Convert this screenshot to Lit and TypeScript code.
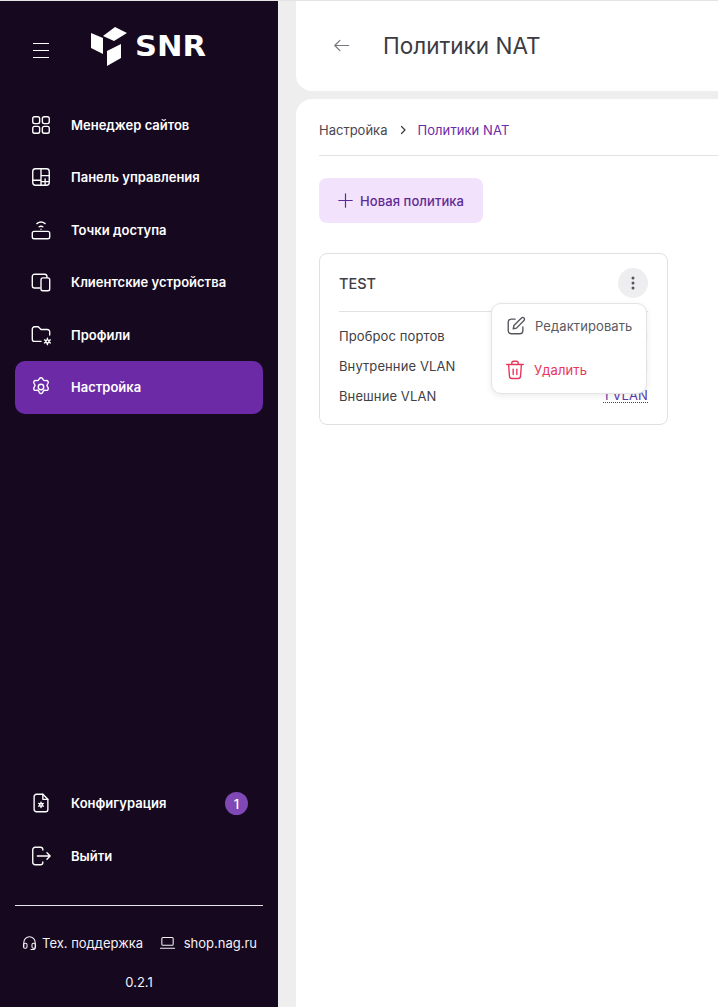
import { LitElement, html, css, svg } from "lit";
import { customElement } from "lit/decorators.js";

const I = (c: unknown, s = 22) => html`<svg class="ic" width=${s} height=${s} viewBox="0 0 24 24" fill="none" stroke="currentColor" stroke-width="1.5" stroke-linecap="round" stroke-linejoin="round">${c}</svg>`;

const nav = [
  ["Менеджер сайтов", svg`<rect x="3" y="3" width="7.5" height="7.5" rx="2"/><rect x="13.5" y="3" width="7.5" height="7.5" rx="2"/><rect x="3" y="13.5" width="7.5" height="7.5" rx="2"/><rect x="13.5" y="13.5" width="7.5" height="7.5" rx="2"/>`],
  ["Панель управления", svg`<rect x="3" y="3" width="18" height="18" rx="3"/><path d="M3 15.500h9M12 3v18M12 10.500h9M16.500 14v7M12 17h9"/>`],
  ["Точки доступа", svg`<rect x="2.500" y="13.500" width="19" height="8" rx="2"/><path d="M7.500 5c2.700-2 6.300-2 9 0M10 8.500c1.200-.8 2.800-.8 4 0M12 11.200v.1"/>`],
  ["Клиентские устройства", svg`<path d="M11 18.500H5a2.500 2.500 0 0 1-2.500-2.500V6A2.500 2.500 0 0 1 5 3.500h11A2.500 2.500 0 0 1 18.500 6v1"/><rect x="12" y="7.500" width="9.500" height="14" rx="2"/>`],
  ["Профили", svg`<path d="M12 19H5a2.500 2.500 0 0 1-2.500-2.500v-11A2.500 2.500 0 0 1 5 3h4l3 3h7a2.500 2.500 0 0 1 2.500 2.500V12"/><circle cx="19" cy="19" r="1.700"/><path d="M19 15.500v1.500M19 21v1.500M15.800 17.300l1.500.8M20.700 19.900l1.500.8M15.800 20.700l1.500-.8M20.700 18.100l1.500-.8"/>`],
  ["Настройка", svg`<circle cx="12" cy="12" r="3"/><path d="M10.300 2.800a2 2 0 0 1 3.400 0l.7 1.200a2 2 0 0 0 1.900 1l1.500-.1a2 2 0 0 1 1.900 3l-.8 1.300a2 2 0 0 0 0 2.200l.8 1.300a2 2 0 0 1-1.900 3l-1.500-.1a2 2 0 0 0-1.900 1l-.7 1.600a2 2 0 0 1-3.400 0l-.7-1.600a2 2 0 0 0-1.900-1l-1.500.1a2 2 0 0 1-1.900-3l.8-1.300a2 2 0 0 0 0-2.200l-.8-1.300a2 2 0 0 1 1.900-3l1.500.1a2 2 0 0 0 1.900-1z"/>`],
] as const;

@customElement("app-root")
export class AppRoot extends LitElement {
  static styles = css`
    :host { display: block; font-family: Inter, "Liberation Sans", sans-serif; }
    * { box-sizing: border-box; }
    .page { display: flex; width: 718px; height: 1007px; overflow: hidden; background: #eeeeee; border-top: 1px solid #e4e4e4; }
    .side { width: 278px; flex: none; background: #15081f; color: #fff; display: flex; flex-direction: column; padding: 0 15px 9px; }
    .top { height: 90px; flex: none; display: flex; align-items: center; padding-left: 17px; margin-bottom: 7.500px; }
    .burger { color: #fff; width: 18px; height: 18px; display: block; margin-top: 8px; flex: none; }
    .logo { display: flex; align-items: center; margin-left: 40px; gap: 7px; }
    .logo svg { display: block; flex: none; }
    .logo-text { font: 700 28px/28px "DejaVu Sans", sans-serif; transform: scaleX(1.090); transform-origin: left center; padding-top: 2px; }
    .nav { display: flex; flex-direction: column; flex: 1; }
    .item { height: 52.500px; flex: none; display: flex; align-items: center; padding-left: 15px; gap: 19px; border-radius: 10px; font-size: 13px; font-weight: 600; color: #fff; position: relative; }
    .item.active { background: #6c2aa6; }
    .ic { flex: none; display: block; }
    .item .badge { position: absolute; right: 15px; top: 15px; width: 23px; height: 23px; border-radius: 50%; background: #7f48b4; font-size: 13px; font-weight: 500; display: flex; align-items: center; justify-content: center; }
    .spacer { flex: 1; }
    .bottom { display: flex; flex-direction: column; }
    .hr { height: 1px; background: #e8e4ea; margin-top: 23px; }
    .links { display: flex; align-items: center; justify-content: space-between; padding: 27px 6px 0 6px; font-size: 13px; color: #f4f1f6; height: 46px; }
    .link { display: flex; align-items: center; gap: 4px; }
    .link.shop { gap: 8px; }
    .ver { text-align: center; font-size: 13px; color: #f4f1f6; margin-top: 22px; height: 24px; }

    .main { flex: 1; min-width: 0; padding-left: 18px; display: flex; flex-direction: column; gap: 8px; }
    .head { height: 90px; flex: none; background: #fff; border-bottom-left-radius: 16px; display: flex; align-items: center; padding: 0 0 2px 36px; gap: 32px; color: #3c3c44; }
    .head .ic { color: #77777d; }
    h1 { margin: 0; font-size: 22.500px; font-weight: 400; color: #3b3b42; }
    .content { flex: 1; background: #fff; border-top-left-radius: 16px; padding-left: 23px; }
    .crumbs { height: 57px; display: flex; align-items: center; font-size: 13px; border-bottom: 1px solid #e2e2e2; color: #4a4650; padding-top: 6px; }
    .crumbs .chev { margin: 0 8px 0 10px; color: #3a3640; }
    .crumbs .chev svg { stroke-width: 2.400; }
    .crumbs b { font-weight: 400; color: #6c2aa6; letter-spacing: .08px; }
    .btn { margin-top: 22px; width: 164px; height: 45px; border-radius: 8px; background: #f2e2fc; color: #5f2a96; display: flex; align-items: center; padding-left: 17px; gap: 5px; font-size: 13px; font-weight: 500; letter-spacing: .08px; }
    .card { position: relative; margin-top: 30px; width: 349px; height: 172px; border: 1px solid #e0e0e0; border-radius: 8px; padding: 0 19px; color: #3f3f46; }
    .card-head { height: 58px; padding-top: 1px; display: flex; align-items: center; justify-content: space-between; border-bottom: 1px solid #e2e2e2; font-size: 14.500px; font-weight: 500; }
    .more { width: 30px; height: 30px; border-radius: 50%; background: #eeeef0; display: flex; align-items: center; justify-content: center; color: #55555c; }
    .rows { padding-top: 9px; display: flex; flex-direction: column; font-size: 13px; letter-spacing: .1px; }
    .row { height: 30px; display: flex; align-items: center; justify-content: space-between; }
    .val { color: #5b3aa8; }
    .val.dotted { border-bottom: 1px dotted #6c2aa6; line-height: 13px; }
    .menu { position: absolute; left: 171px; top: 49px; width: 156px; height: 91px; background: #fff; border: 1px solid #e4e4e4; border-radius: 10px; box-shadow: 0 2px 6px rgba(0,0,0,.08); font-size: 13px; letter-spacing: .1px; color: #5a5a60; display: flex; flex-direction: column; }
    .mi { height: 44px; display: flex; align-items: center; padding-left: 13px; gap: 8px; }
    .mi .ic { color: #55555c; }
    .mi.del { color: #e8365d; gap: 8px; padding-left: 12px; }
    .mi.del .ic { color: #e8365d; }
  `;

  render() {
    return html`<div class="page">
      <aside class="side">
        <div class="top">
          <svg class="burger" viewBox="0 0 18 18" fill="none" stroke="currentColor" stroke-width="1"><path d="M1 2.500h16M1 9.500h16M1 16.500h16"/></svg>
          <div class="logo">
            <svg width="38" height="40" viewBox="0 0 38 40" fill="#fff">
              <path d="M13 10L25 1l12 6-13 8z"/>
              <path d="M1 7l12 5v16L1 22z"/>
              <path d="M17 25l14-7v14l-14 8z"/>
            </svg>
            <span class="logo-text">SNR</span>
          </div>
        </div>
        <nav class="nav">
          ${nav.map(([t, p], i) => html`<div class="item ${i === 5 ? "active" : ""}">${I(p)}<span>${t}</span></div>`)}
          <div class="spacer"></div>
          <div class="bottom">
            <div class="item">${I(svg`<path d="M14 2.500H7A2.500 2.500 0 0 0 4.500 5v14A2.500 2.500 0 0 0 7 21.500h10a2.500 2.500 0 0 0 2.500-2.500V8z"/><path d="M14 2.500V8h5.500"/><circle cx="12" cy="14" r="1.500"/><path d="M12 11v1M12 16v1M9.500 12.500l1 .5M13.500 15l1 .5M9.500 15.500l1-.5M13.500 13l1-.5"/>`)}<span>Конфигурация</span><span class="badge">1</span></div>
            <div class="item">${I(svg`<path d="M14 5.500V5a2.500 2.500 0 0 0-2.500-2.500H5.500A2.500 2.500 0 0 0 3 5v14a2.500 2.500 0 0 0 2.500 2.500h6A2.500 2.500 0 0 0 14 19v-.5"/><path d="M8 12h14M18.500 8.500L22 12l-3.500 3.500"/>`)}<span>Выйти</span></div>
            <div class="hr"></div>
            <div class="links">
              <span class="link">${I(svg`<path d="M4 18v-6a8 8 0 0 1 16 0v6"/><rect x="3.500" y="13" width="5" height="7" rx="2"/><rect x="15.500" y="13" width="5" height="7" rx="2"/><path d="M20 19a3 3 0 0 1-3 3h-3"/>`, 17)}Тех. поддержка</span>
              <span class="link shop">${I(svg`<rect x="4" y="5" width="16" height="11" rx="1.500"/><path d="M2 20h20"/>`, 17)}shop.nag.ru</span>
            </div>
            <div class="ver">0.2.1</div>
          </div>
        </nav>
      </aside>
      <main class="main">
        <header class="head">
          ${I(svg`<path d="M21 12H3.500M10 5.500L3.500 12l6.500 6.500"/>`, 19)}
          <h1>Политики NAT</h1>
        </header>
        <section class="content">
          <div class="crumbs">Настройка<span class="chev">${I(svg`<path d="M9 5l7 7-7 7"/>`, 12)}</span><b>Политики NAT</b></div>
          <div class="btn">${I(svg`<path d="M12 3.500v17M3.500 12h17"/>`, 19)}Новая политика</div>
          <div class="card">
            <div class="card-head">TEST<span class="more"><svg width="4" height="14" viewBox="0 0 4 14" fill="currentColor"><circle cx="2" cy="2" r="1.500"/><circle cx="2" cy="7" r="1.500"/><circle cx="2" cy="12" r="1.500"/></svg></span></div>
            <div class="rows">
              <div class="row">Проброс портов<span class="val">1</span></div>
              <div class="row">Внутренние VLAN<span class="val">1</span></div>
              <div class="row">Внешние VLAN<span class="val dotted">1 VLAN</span></div>
            </div>
            <div class="menu">
              <div class="mi">${I(svg`<path d="M11 4.500H7A3.500 3.500 0 0 0 3.500 8v9A3.500 3.500 0 0 0 7 20.500h9a3.500 3.500 0 0 0 3.500-3.500v-4"/><path d="M9 15l.7-3.500L18 3.200a1.900 1.900 0 0 1 2.700 0 1.900 1.900 0 0 1 0 2.700L12.500 14.300z"/>`)}Редактировать</div>
              <div class="mi del">${I(svg`<path d="M3 6h18M8.500 6V4.500a2 2 0 0 1 2-2h3a2 2 0 0 1 2 2V6M5 6l1 13a2.500 2.500 0 0 0 2.500 2.300h7A2.500 2.500 0 0 0 18 19l1-13M10 11v6M14 11v6"/>`)}Удалить</div>
            </div>
          </div>
        </section>
      </main>
    </div>`;
  }
}
